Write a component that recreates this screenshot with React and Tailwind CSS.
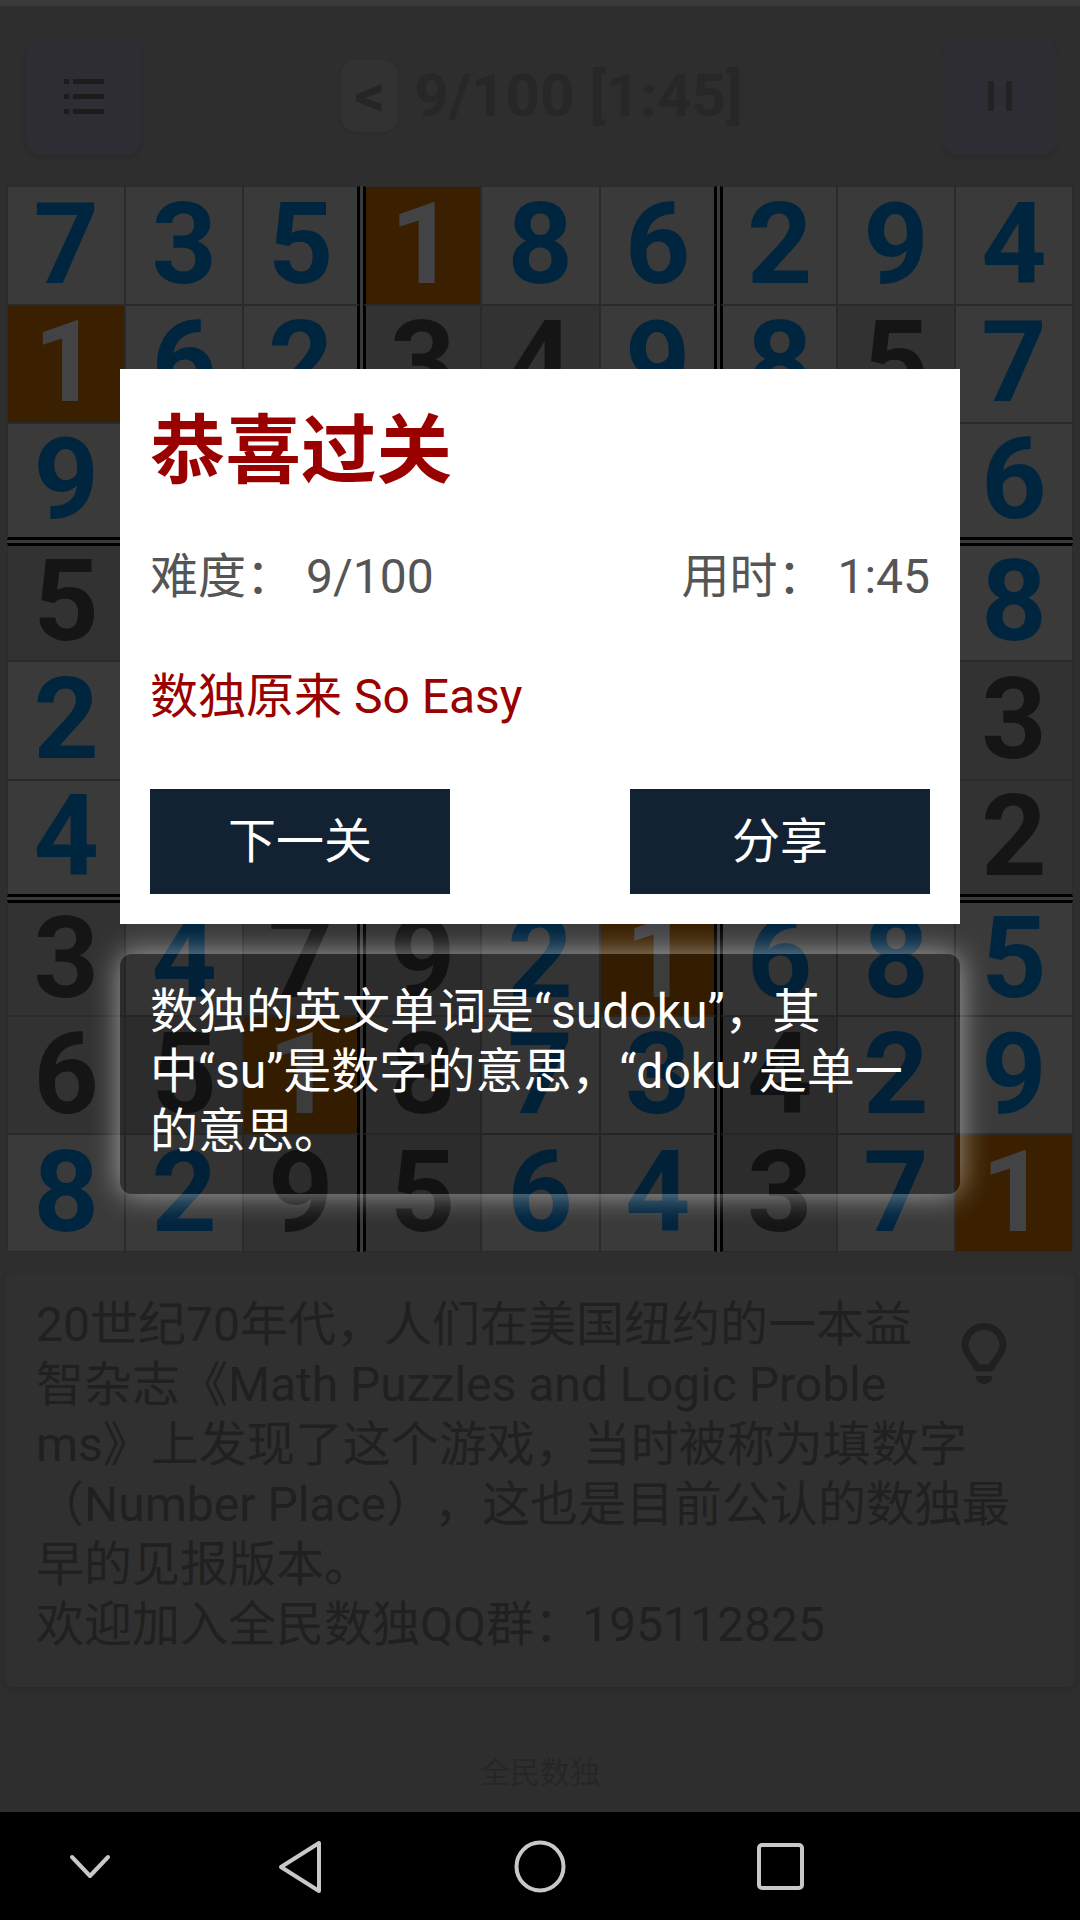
const FONT = { fontFamily: '"Roboto", "Noto Sans CJK SC", sans-serif' };

// 盘面：数字 + 类型（b 蓝色填入，k 黑色题面，o 橙色高亮）
const board = [
  ["7b", "3b", "5b", "1o", "8b", "6b", "2b", "9b", "4b"],
  ["1o", "6b", "2b", "3k", "4k", "9b", "8b", "5k", "7b"],
  ["9b", "8b", "4b", "7b", "5k", "2b", "1o", "3b", "6b"],
  ["5k", "1b", "6k", "2b", "9k", "4b", "3b", "7k", "8b"],
  ["2b", "9k", "7b", "6k", "1o", "8b", "5b", "4b", "3k"],
  ["4b", "3k", "8b", "5b", "7b", "1o", "9k", "6b", "2k"],
  ["3k", "4b", "7k", "9k", "2b", "1o", "6b", "8b", "5b"],
  ["6k", "5k", "1o", "8k", "7b", "3b", "4k", "2b", "9b"],
  ["8b", "2b", "9k", "5k", "6b", "4b", "3k", "7b", "1o"],
];

const cellTheme = {
  b: "bg-[#3a3a3a] text-[#00253f]",
  k: "bg-[#323232] text-[#151515]",
  o: "bg-[#3a2000] text-[#434345]",
};

function Cell({ value, kind, row, col }) {
  const right = col === 2 || col === 5 ? "mr-[1.5px] border-r-[3px] border-r-black" : "";
  const left = col === 3 || col === 6 ? "ml-[1.5px] border-l-[3px] border-l-black" : "";
  const bottom = row === 2 || row === 5 ? "mb-[1.5px] border-b-[3px] border-b-black" : "";
  const top = row === 3 || row === 6 ? "mt-[1.5px] border-t-[3px] border-t-black" : "";
  return (
    <div
      className={`flex items-center justify-center border-[1.5px] border-[#2a2a2a] pb-[3px] text-[114px] leading-[100px] font-bold ${cellTheme[kind]} ${right} ${left} ${bottom} ${top}`}
    >
      {value}
    </div>
  );
}

function NavBar() {
  return (
    <div className="flex h-[109px] items-center bg-black">
      <svg width="1080" height="109" viewBox="0 0 1080 109" fill="none" stroke="#c8c8c8" strokeWidth="4" strokeLinejoin="round" strokeLinecap="round">
        <path d="M72 45 L90 64 L108 45" />
        <path d="M319 31 L319 79 L281 55 Z" />
        <ellipse cx="540" cy="54.5" rx="23.5" ry="24" />
        <rect x="759" y="33" width="43" height="43" rx="3" />
      </svg>
    </div>
  );
}

export default function App() {
  return (
    <div className="relative h-[1920px] w-[1080px] overflow-hidden bg-[#2e2e2e]" style={FONT}>
      <div className="h-[6px] bg-[#3a3a3a]"></div>

      <div className="flex h-[180px] items-start justify-between pt-[31px] pr-[23px] pl-[26px]">
        <div className="flex h-[118px] w-[115px] items-center justify-center rounded-[15px] bg-[#2d2d33] shadow-[0_3px_6px_rgba(0,0,0,0.1)]">
          <svg width="40" height="35" viewBox="0 0 40 35" fill="#1c1c1c">
            <rect x="0" y="0" width="5" height="5" />
            <rect x="9" y="0" width="31" height="5" />
            <rect x="0" y="15" width="5" height="5" />
            <rect x="9" y="15" width="31" height="5" />
            <rect x="0" y="30" width="5" height="5" />
            <rect x="9" y="30" width="31" height="5" />
          </svg>
        </div>
        <div className="mt-[23px] flex items-center gap-[16px] text-[#272727]">
          <div className="flex h-[72px] w-[57px] items-center justify-center rounded-[15px] bg-[#323232] text-[60px] leading-none font-bold text-[#252525] shadow-[0_1px_3px_rgba(0,0,0,0.1)]">
            &lt;
          </div>
          <div className="text-[60px] leading-[72px] font-bold">9/100 [1:45]</div>
        </div>
        <div className="flex h-[118px] w-[114px] items-center justify-center gap-[12px] rounded-[15px] bg-[#2d2d33] shadow-[0_3px_6px_rgba(0,0,0,0.1)]">
          <div className="h-[30px] w-[6px] bg-[#222222]"></div>
          <div className="h-[30px] w-[6px] bg-[#222222]"></div>
        </div>
      </div>

      <div className="ml-[7px] grid w-[1066px] grid-cols-[repeat(3,118.17px)_repeat(3,119.17px)_repeat(3,118px)] grid-rows-[repeat(3,118.5px)_repeat(3,119px)_repeat(3,117.83px)] bg-[#3a3a3a]">
        {board.map((line, row) =>
          line.map((item, col) => <Cell key={`${row}-${col}`} value={item[0]} kind={item[1]} row={row} col={col} />)
        )}
      </div>

      <div className="mx-[6px] mt-[21px] flex h-[414px] items-start justify-between rounded-[6px] bg-[#303030] pt-[22px] pr-[67px] pl-[30px] text-[48px] leading-[60px] whitespace-nowrap text-[#202020] shadow-[0_4px_8px_rgba(0,0,0,0.12)] [text-spacing-trim:space-all]">
        <div>
          20世纪70年代，人们在美国纽约的一本益
          <br />
          智杂志《Math Puzzles and Logic Proble
          <br />
          ms》上发现了这个游戏，当时被称为填数字
          <br />
          （Number Place），这也是目前公认的数独最
          <br />
          早的见报版本。
          <br />
          欢迎加入全民数独QQ群：195112825
        </div>
      </div>
      <div className="mt-[68px] text-center text-[30px] leading-[36px] text-[#262626]">全民数独</div>
      <div className="mt-[21px]">
        <NavBar />
      </div>

      {/* 提示灯泡 */}
      <svg className="absolute top-[1323px] left-[961px]" width="46" height="61" viewBox="0 0 46 61" fill="none">
        <path
          d="M23 3.5 A19 19 0 0 1 42 22 C42 31 33 37 30 45 L16 45 C13 37 4 31 4 22 A19 19 0 0 1 23 3.5 Z"
          stroke="#202020"
          strokeWidth="7"
          strokeLinejoin="round"
        />
        <path d="M15 53 H31 V55 A8 6 0 0 1 15 55 Z" fill="#202020" />
      </svg>

      {/* 过关弹窗 */}
      <div className="absolute top-[369px] left-[120px] flex h-[555px] w-[840px] flex-col bg-white px-[30px]">
        <div className="mt-[37px] text-[75.5px] leading-[90px] font-bold text-[#990000]">恭喜过关</div>
        <div className="mt-[51px] flex justify-between text-[48px] leading-[60px] text-[#555555]">
          <span>难度： 9/100</span>
          <span>用时： 1:45</span>
        </div>
        <div className="mt-[60px] text-[48px] leading-[60px] text-[#990000]">数独原来 So Easy</div>
        <div className="mt-[62px] flex justify-between">
          <button className="h-[105px] w-[300px] bg-[#122232] text-[48px] text-white">下一关</button>
          <button className="h-[105px] w-[300px] bg-[#122232] text-[48px] text-white">分享</button>
        </div>
      </div>

      {/* 小知识提示 */}
      <div className="absolute top-[954px] left-[120px] h-[240px] w-[840px] rounded-[12px] bg-black/10 px-[30px] pt-[28px] text-[48px] leading-[60px] whitespace-nowrap text-white shadow-[0_0_30px_rgba(255,255,255,0.55)]">
        数独的英文单词是“sudoku”，其
        <br />
        中“su”是数字的意思，“doku”是单一
        <br />
        的意思。
      </div>
    </div>
  );
}
